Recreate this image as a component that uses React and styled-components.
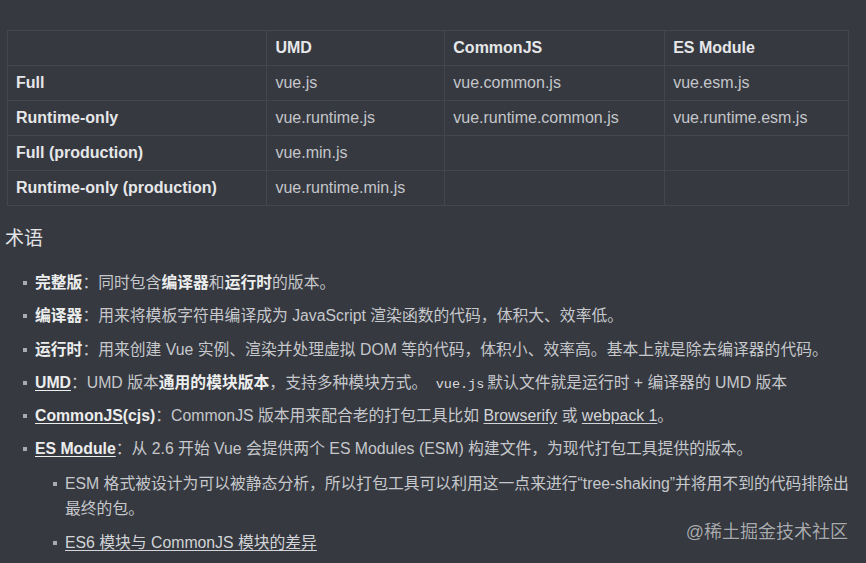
import React from "react";
import styled, { createGlobalStyle } from "styled-components";

const GlobalStyle = createGlobalStyle`
  html, body {
    margin: 0;
    padding: 0;
    background: #363940;
  }
  body {
    font-family: "Liberation Sans", "Noto Sans CJK SC", sans-serif;
    color: #c6c8cc;
  }
`;

const Page = styled.div`
  position: relative;
  width: 866px;
  height: 563px;
  overflow: hidden;
  padding: 30px 0 0 7px;
  box-sizing: border-box;
`;

const Table = styled.table`
  border-collapse: collapse;
  width: 842px;
  font-size: 16px;

  th, td {
    border: 1px solid #43464e;
    height: 34px;
    padding: 0 0 0 8px;
    text-align: left;
    vertical-align: middle;
  }
  th {
    color: #e6e7e9;
    font-weight: bold;
  }
  td {
    color: #c4c6ca;
  }
  td:first-child {
    color: #e6e7e9;
    font-weight: bold;
  }
`;

const Heading = styled.h3`
  margin: 20px 0 0 -2px;
  font-size: 19px;
  font-weight: normal;
  color: #e2e3e5;
  line-height: 26px;
`;

const List = styled.ul`
  list-style: none;
  margin: ${(p) => (p.$nested ? "6px 0 0" : "14px 0 0")};
  padding: 0 0 0 ${(p) => (p.$nested ? "30px" : "28px")};
  font-size: 15.8px;
`;

const Item = styled.li`
  position: relative;
  line-height: 25px;
  padding: 4px 0 4.3px;
  max-width: ${(p) => (p.$wide ? "786px" : "none")};

  &::before {
    content: "";
    position: absolute;
    left: -12px;
    top: 15px;
    width: 4px;
    height: 4px;
    background: #a9abb0;
  }
`;

const Strong = styled.b`
  color: #eceded;
`;

const Link = styled.span`
  text-decoration: underline;
  text-underline-offset: 2px;
  color: ${(p) => (p.$bold ? "#eceded" : "#d2d4d7")};
  font-weight: ${(p) => (p.$bold ? "bold" : "normal")};
`;

const Code = styled.code`
  font-family: "Liberation Mono", "DejaVu Sans Mono", monospace;
  font-size: 13.5px;
  line-height: 1;
  color: #d8d9dc;
  margin: 0 3px 0 4px;
`;

const Watermark = styled.div`
  position: absolute;
  right: 18px;
  bottom: 20px;
  font-size: 18px;
  color: #a9abaf;
  text-shadow: 0 0 1px rgba(0, 0, 0, 0.4);
`;

const rows = [
  ["Full", "vue.js", "vue.common.js", "vue.esm.js"],
  ["Runtime-only", "vue.runtime.js", "vue.runtime.common.js", "vue.runtime.esm.js"],
  ["Full (production)", "vue.min.js", "", ""],
  ["Runtime-only (production)", "vue.runtime.min.js", "", ""],
];

const App = () => {
  return (
    <Page>
      <GlobalStyle />
      <Table>
        <colgroup>
          <col style={{ width: 260 }} />
          <col style={{ width: 178 }} />
          <col style={{ width: 220 }} />
          <col style={{ width: 184 }} />
        </colgroup>
        <thead>
          <tr>
            <th></th>
            <th>UMD</th>
            <th>CommonJS</th>
            <th>ES Module</th>
          </tr>
        </thead>
        <tbody>
          {rows.map((r) => (
            <tr key={r[0]}>
              {r.map((c, i) => (
                <td key={i}>{c}</td>
              ))}
            </tr>
          ))}
        </tbody>
      </Table>

      <Heading>术语</Heading>

      <List>
        <Item>
          <Strong>完整版</Strong>：同时包含<Strong>编译器</Strong>和<Strong>运行时</Strong>的版本。
        </Item>
        <Item>
          <Strong>编译器</Strong>：用来将模板字符串编译成为 JavaScript 渲染函数的代码，体积大、效率低。
        </Item>
        <Item>
          <Strong>运行时</Strong>：用来创建 Vue 实例、渲染并处理虚拟 DOM 等的代码，体积小、效率高。基本上就是除去编译器的代码。
        </Item>
        <Item>
          <Link $bold>UMD</Link>：UMD 版本<Strong>通用的模块版本</Strong>，支持多种模块方式。 <Code>vue.js</Code>默认文件就是运行时 + 编译器的 UMD 版本
        </Item>
        <Item>
          <Link $bold>CommonJS</Link><Strong>(cjs)</Strong>：CommonJS 版本用来配合老的打包工具比如 <Link>Browserify</Link> 或 <Link>webpack 1</Link>。
        </Item>
        <Item>
          <Link $bold>ES Module</Link>：从 2.6 开始 Vue 会提供两个 ES Modules (ESM) 构建文件，为现代打包工具提供的版本。
          <List $nested>
            <Item $wide>
              ESM 格式被设计为可以被静态分析，所以打包工具可以利用这一点来进行“tree-shaking”并将用不到的代码排除出最终的包。
            </Item>
            <Item>
              <Link>ES6 模块与 CommonJS 模块的差异</Link>
            </Item>
          </List>
        </Item>
      </List>

      <Watermark>@稀土掘金技术社区</Watermark>
    </Page>
  );
};

export default App;
